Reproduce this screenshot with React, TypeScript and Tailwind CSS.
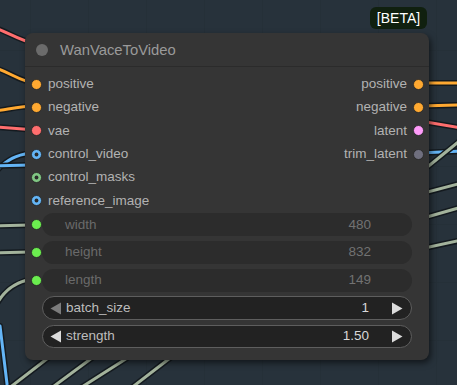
import React from "react";

const WIRE = "#a3b39c";

const wires: { d: string; c: string }[] = [
    { d: "M -5 28 C 8 32, 18 40, 36 44", c: "#ff6e6e" },
    { d: "M -5 68 C 10 72, 20 82, 36 83", c: "#ffa931" },
    { d: "M -5 111 C 10 109, 20 106, 36 106", c: "#ffa931" },
    { d: "M -5 127 L 36 130", c: "#ff6e6e" },
    { d: "M -5 173 C 5 160, 18 153, 36 153", c: "#64b5f6" },
    { d: "M -5 166 L 30 165", c: "#64b5f6" },
    { d: "M -5 226 L 30 225", c: WIRE },
    { d: "M -5 253 L 30 252", c: WIRE },
    { d: "M -2 302 C 5 290, 15 282, 32 279", c: WIRE },
    { d: "M 0 326 L 8 392", c: "#64b5f6" },
    { d: "M 4 392 L 52 355", c: WIRE },
    { d: "M 46 392 L 96 355", c: WIRE },
    { d: "M 74 392 L 132 355", c: WIRE },
    { d: "M 126 392 L 174 355", c: WIRE },
    { d: "M 420 83 L 462 83", c: "#ffa931" },
    { d: "M 420 106 L 462 105", c: "#ffa931" },
    { d: "M 420 121 L 462 128", c: "#ff6e6e" },
    { d: "M 420 153 L 462 151", c: "#64b5f6" },
    { d: "M 420 173 L 462 139", c: WIRE },
    { d: "M 420 194 L 462 183", c: WIRE },
    { d: "M 420 219 L 462 207", c: WIRE },
    { d: "M 420 249 L 462 240", c: WIRE },
];

const inputs = [
    { name: "positive", color: "#ffa931", ring: false },
    { name: "negative", color: "#ffa931", ring: false },
    { name: "vae", color: "#ff6e6e", ring: false },
    { name: "control_video", color: "#64b5f6", ring: true },
    { name: "control_masks", color: "#81c784", ring: true },
    { name: "reference_image", color: "#64b5f6", ring: true },
];

const outputs = [
    { name: "positive", color: "#ffa931" },
    { name: "negative", color: "#ffa931" },
    { name: "latent", color: "#ff9cf9" },
    { name: "trim_latent", color: "#6f6f7e" },
];

function Dot({ color, ring }: { color: string; ring?: boolean }) {
    return (
        <svg width="11" height="11" viewBox="0 0 11 11" className="shrink-0">
            <circle cx="5.5" cy="5.5" r="5" fill={color} stroke="#262626" strokeWidth="0.8" />
            {ring && <circle cx="5.5" cy="5.5" r="1.9" fill="#2b2b2b" />}
        </svg>
    );
}

function Arrow({ dir, color }: { dir: "l" | "r"; color: string }) {
    return (
        <svg width="12" height="13" viewBox="0 0 12 13" className="shrink-0">
            <polygon points={dir === "l" ? "11,0.5 11,12.5 0.5,6.5" : "1,0.5 1,12.5 11.5,6.5"} fill={color} />
        </svg>
    );
}

function DisabledWidget({ label, value }: { label: string; value: string }) {
    return (
        <div className="flex items-center pl-[6px]">
            <Dot color="#6bed4f" />
            <div className="flex h-[23px] w-[370px] items-center justify-between rounded-full bg-[#2c2c2c] pl-[23px] pr-[41px] text-[#6a6a6a]">
                <span>{label}</span>
                <span className="text-[#727272]">{value}</span>
            </div>
        </div>
    );
}

function NumberWidget({ label, value, leftColor }: { label: string; value: string; leftColor: string }) {
    return (
        <div className="flex items-center pl-[17px]">
            <div className="flex h-[23.5px] w-[370px] items-center rounded-full border border-[#5e5e5e] bg-[#222222] pl-[7px] pr-[8px]">
                <Arrow dir="l" color={leftColor} />
                <span className="ml-[4px] flex-1 text-[#bdbdbd]">{label}</span>
                <span className="mr-[22px] text-[#d8d8d8]">{value}</span>
                <Arrow dir="r" color="#dcdcdc" />
            </div>
        </div>
    );
}

export default function App() {
    return (
        <div className="relative h-[385px] w-[457px] overflow-hidden bg-[#27323b] font-['Liberation_Sans',Arial,sans-serif]">
            <svg className="absolute inset-0" width="457" height="385">
                <defs>
                    <pattern id="grid" width="58" height="58" patternUnits="userSpaceOnUse" x="30" y="-8">
                        <path d="M 58 0 L 0 0 0 58" fill="none" stroke="#242e36" strokeWidth="1" />
                    </pattern>
                </defs>
                <rect width="457" height="385" fill="url(#grid)" />
                {wires.map((w, i) => (
                    <g key={i} fill="none" strokeLinecap="round">
                        <path d={w.d} stroke="#141a1f" strokeWidth="6" />
                        <path d={w.d} stroke={w.c} strokeWidth="3" />
                    </g>
                ))}
            </svg>

            <div className="absolute left-[370px] top-[7px] flex h-[22px] w-[57px] items-center justify-center rounded-[6px] bg-[#10200f] text-[14px] text-white">
                [BETA]
            </div>

            <div className="absolute left-[25px] top-[32.5px] h-[327px] w-[404px] rounded-[8px] bg-[#353535] text-[13.5px] shadow-[2px_3px_6px_rgba(0,0,0,0.55)]">
                <div className="flex h-[34px] items-center border-b border-[#2b2b2b] pl-[11px] pt-[2px]">
                    <span className="h-[12px] w-[12px] rounded-full bg-[#6b6b6b]" />
                    <span className="ml-[12px] text-[14.8px] text-[#9a9a9a]">WanVaceToVideo</span>
                </div>

                <div className="flex pt-[6px]">
                    <div className="flex-1">
                        {inputs.map((s) => (
                            <div key={s.name} className="flex h-[23.3px] items-center pl-[6px]">
                                <Dot color={s.color} ring={s.ring} />
                                <span className="ml-[6px] text-[#b2b2b2]">{s.name}</span>
                            </div>
                        ))}
                    </div>
                    <div>
                        {outputs.map((s) => (
                            <div key={s.name + "o"} className="flex h-[23.3px] items-center justify-end pr-[5px]">
                                <span className="mr-[6px] text-[#b2b2b2]">{s.name}</span>
                                <Dot color={s.color} />
                            </div>
                        ))}
                    </div>
                </div>

                <div className="mt-[1px] flex flex-col gap-[4.7px]">
                    <DisabledWidget label="width" value="480" />
                    <DisabledWidget label="height" value="832" />
                    <DisabledWidget label="length" value="149" />
                    <NumberWidget label="batch_size" value="1" leftColor="#7c7c7c" />
                    <NumberWidget label="strength" value="1.50" leftColor="#dcdcdc" />
                </div>
            </div>
        </div>
    );
}
